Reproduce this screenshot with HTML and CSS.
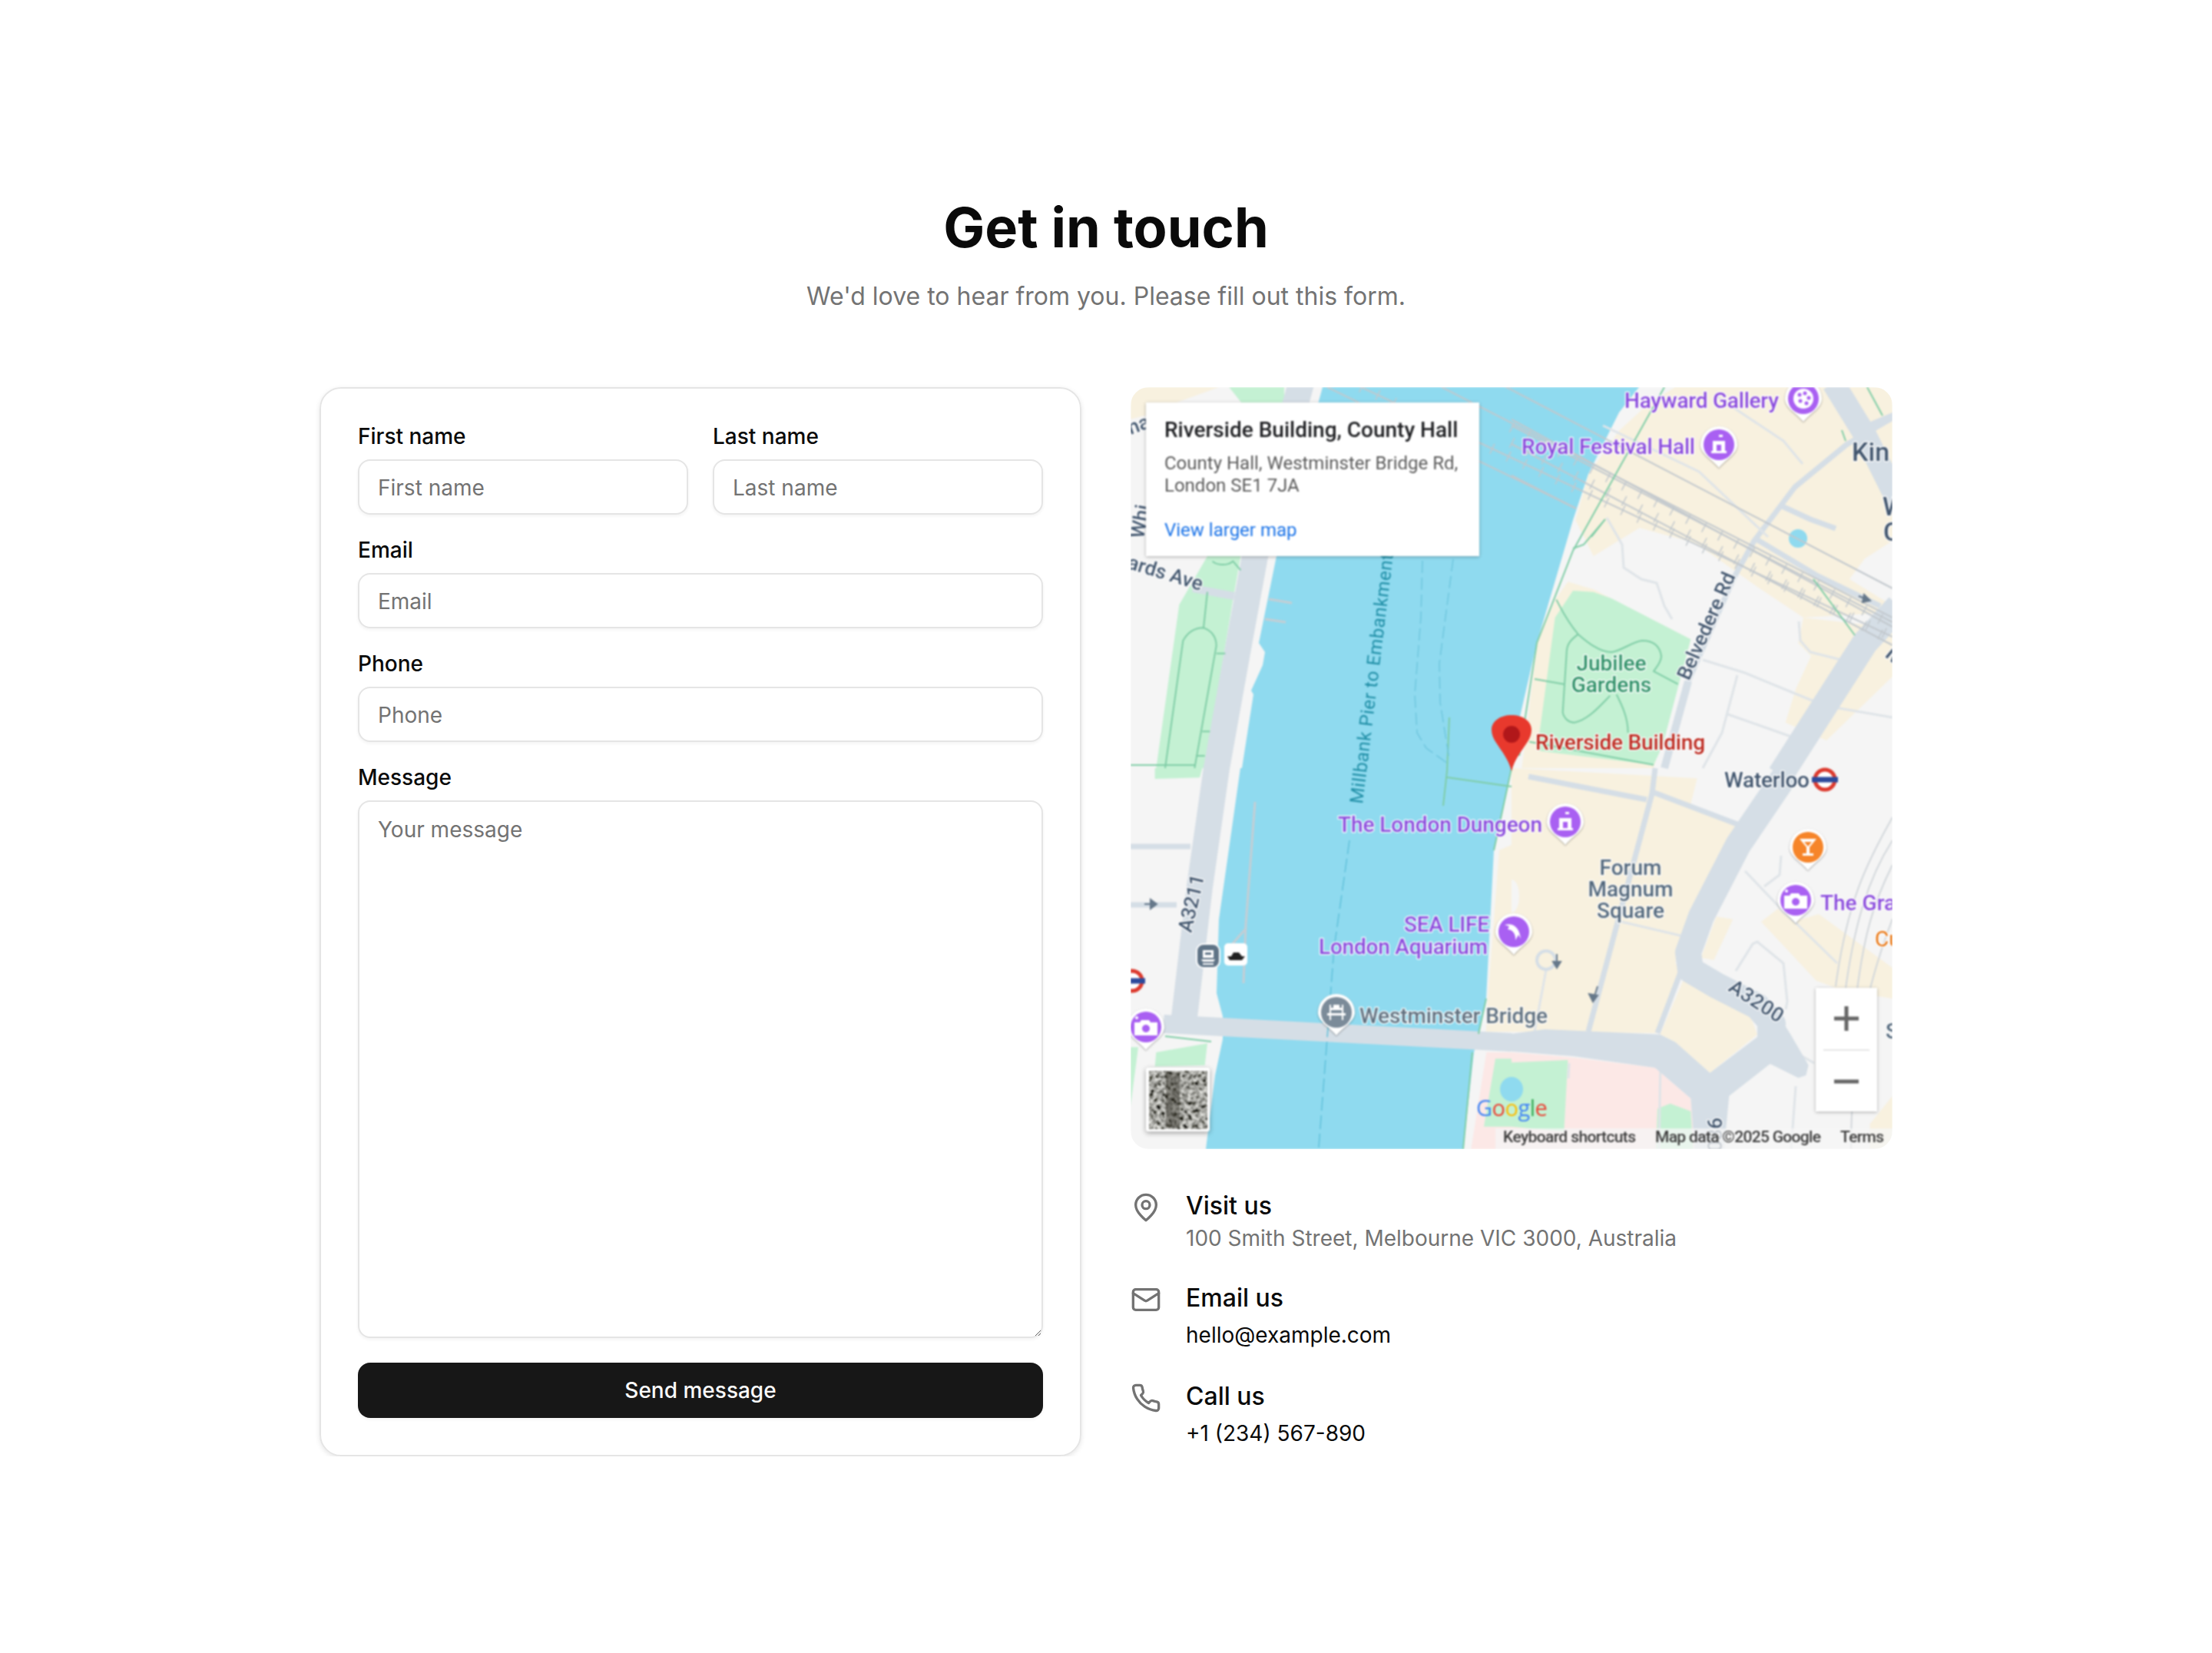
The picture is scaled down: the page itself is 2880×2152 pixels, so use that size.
FILE: index.html
```html
<!DOCTYPE html>
<html lang="en">
<head>
    <meta charset="UTF-8">
    <meta name="viewport" content="width=device-width, initial-scale=1.0">
    <title>Get in touch</title>
    <link rel="stylesheet" href="styles.css">
</head>
<body>

    <main class="page">
        <header class="intro">
            <h1>Get in touch</h1>
            <p>We'd love to hear from you. Please fill out this form.</p>
        </header>

        <div class="columns">
            <!-- Form card -->
            <form class="card">
                <div class="name-row">
                    <div class="field">
                        <label for="first">First name</label>
                        <input id="first" type="text" placeholder="First name">
                    </div>
                    <div class="field">
                        <label for="last">Last name</label>
                        <input id="last" type="text" placeholder="Last name">
                    </div>
                </div>
                <div class="field">
                    <label for="email">Email</label>
                    <input id="email" type="email" placeholder="Email">
                </div>
                <div class="field">
                    <label for="phone">Phone</label>
                    <input id="phone" type="tel" placeholder="Phone">
                </div>
                <div class="field">
                    <label for="message">Message</label>
                    <textarea id="message" placeholder="Your message"></textarea>
                </div>
                <button class="send" type="button">Send message</button>
            </form>

            <!-- Map and contact details -->
            <section class="side">
                <div class="map">
                    <div class="map-canvas">
                        <svg class="map-art" viewBox="0 0 992 992" width="992" height="992" xmlns="http://www.w3.org/2000/svg">
                            <defs>
                                <filter id="sat" x="0" y="0" width="100%" height="100%">
                                    <feTurbulence type="fractalNoise" baseFrequency="0.2" numOctaves="3" seed="7"/>
                                    <feColorMatrix type="matrix" values="1.5 0 0 0 -0.38  1.5 0 0 0 -0.38  1.45 0 0 0 -0.38  0 0 0 0 1"/>
                                </filter>
                                <path id="pin" d="M-24 0a24 24 0 1 1 48 0c0 12-15 19-24 30c-9-11-24-18-24-30z"/>
                                <g id="glyph-hall">
                                    <path d="M0-13v8M0-13h5v3h-5"/>
                                    <path d="M-8-5h16v13h-16zM-3 0v8h6v-8z" fill-rule="evenodd"/>
                                    <rect x="-10" y="8" width="20" height="3"/>
                                </g>
                                <g id="glyph-camera">
                                    <path d="M-15-6h7l2-3h10l2 3h9v17h-30zM0-3a5 5 0 1 0 .01 0z" fill-rule="evenodd"/>
                                    <circle cx="-12" cy="-12" r="2"/>
                                </g>
                                <g id="tube">
                                    <circle r="13" fill="#fff" stroke="#dc3a2e" stroke-width="5"/>
                                    <rect x="-17" y="-3.5" width="34" height="7" fill="#2c4a9c"/>
                                </g>
                            </defs>

                            <rect class="land" width="992" height="992"/>

                            <!-- top right blocks -->
                            <g transform="translate(496 0) scale(.33333)">
                                <polygon class="beige" points="640,0 1488,0 1488,600 1380,670 1320,750 1450,830 1488,850 1400,930 1140,900 1120,1000 1170,1050 1110,1180 1070,1310 1230,1380 1488,1130 1488,880 1140,900 960,780 720,610 500,550 320,660 250,520 300,340 420,170 540,60"/>
                                <polygon class="beige" points="220,760 320,790 700,985 555,1488 40,1488 100,1000 170,830"/>
                                <polygon class="green" points="240,795 320,800 390,825 700,985 590,1400 555,1475 100,1420 170,900"/>
                            </g>
                            <!-- bottom right blocks -->
                            <g transform="translate(496 496) scale(.33333)">
                                <polygon class="beige" points="0,0 725,40 700,140 880,220 650,700 640,760 660,800 580,1035 0,1030"/>
                                <ellipse class="land" cx="0" cy="500" rx="30" ry="65"/>
                                <polygon class="beige" points="800,580 865,590 790,750 740,740"/>
                                <polygon class="beige" points="580,1040 670,830 930,960 960,1040 775,1190 640,1070"/>
                                <polygon class="beige" points="975,600 1040,550 1100,600 1200,570 1488,780 1488,900 1300,870 1190,830"/>
                                <polygon class="beige" points="1400,1390 1488,1280 1488,1488 1400,1488"/>
                                <polygon class="pink" points="0,1110 240,1130 560,1170 700,1290 720,1488 0,1488"/>
                                <polygon class="green" points="0,1150 220,1140 205,1420 0,1400"/>
                                <polygon class="green" points="570,1330 620,1310 700,1340 710,1488 565,1488"/>
                            </g>
                            <!-- left side blocks -->
                            <g transform="scale(.33333)">
                                <polygon class="beige" points="0,0 345,0 180,60 60,110 0,125"/>
                                <polygon class="green" points="385,0 600,0 600,70 440,70"/>
                                <polygon class="green" points="300,660 430,660 400,830 290,1488 100,1488 190,850"/>
                                <polygon class="green" points="95,1488 280,1488 270,1525 95,1530"/>
                            </g>
                            <g transform="translate(0 496) scale(.33333)">
                                <polygon class="green" points="100,1110 300,1075 290,1160 95,1165"/>
                                <polygon class="green" points="0,1090 30,1090 0,1320"/>
                                <polygon class="beige" points="1488,300 1440,320 1395,900 1388,1030 1488,1030"/>
                                <polygon class="pink" points="1390,1110 1488,1110 1488,1488 1330,1488"/>
                                <polygon class="green" points="1425,1135 1488,1135 1488,1400 1380,1400"/>
                            </g>
                            <ellipse class="water" cx="496" cy="914" rx="15" ry="16"/>

                            <!-- river -->
                            <polygon class="water" points="250,0 662,0 636,33 596,113 576,173 529,333 506,433 496,496 473,603 463,796 453,842 447,866 433,992 98,992 110,896 120,849 120,819 112,789 115,693 143,496 145,496 160,400 157,395 172,362 175,345 167,333 190,220"/>
                            <ellipse class="water" cx="869" cy="197" rx="12" ry="12"/>

                            <!-- small roads -->
                            <g class="road-thin">
                                <polyline points="726,383 786,247 812,200 865,130 932,75 992,40"/>
                                <polyline points="813,197 895,246 976,285"/>
                                <polyline points="846,154 885,172 918,184"/>
                                <polyline points="518,507 672,537"/>
                                <polyline points="682,528 790,569"/>
                                <polyline points="683,496 679,529 596,839"/>
                                <polyline points="0,598 78,598"/>
                                <polyline points="0,674 60,674"/>
                                <polyline points="716,762 686,841"/>
                            </g>
                            <g class="road-hair">
                                <polyline points="620,170 640,205 642,235 665,250 685,255 695,285 705,302"/>
                                <polyline points="745,355 800,372 880,405 905,415 992,430"/>
                                <polyline points="790,375 770,450 745,496"/>
                                <polyline points="775,425 860,455"/>
                                <polyline points="870,305 872,330 885,345 925,355"/>
                                <polyline points="800,630 840,672 920,750"/>
                                <polyline points="788,760 810,725 816,722 850,750 855,800 853,810"/>
                                <polyline points="825,650 845,635 847,610"/>
                                <polyline points="615,50 740,110 830,195"/>
                                <polyline points="760,10 850,70 875,100"/>
                                <polyline points="570,860 690,875 688,992"/>
                                <polyline points="571,880 570,900"/>
                                <polyline points="866,910 860,992"/>
                                <polyline points="855,860 890,880"/>
                                <polyline points="639,696 716,714"/>
                                <polyline points="541,759 526,839"/>
                            </g>
                            <circle class="roundabout" cx="541" cy="746" r="12"/>

                            <!-- main roads -->
                            <g class="road-main">
                                <polyline class="w34" points="222,-5 180,150 162,220 140,340 112,496 90,650 70,820"/>
                                <polyline class="w24" points="43,829 496,853"/>
                                <polyline class="w36" points="856,500 791,596 743,689 726,736 729,759 763,779 816,806 836,829 833,852"/>
                                <polyline class="w36" points="846,505 956,333 1000,285"/>
                                <polyline class="w30" points="915,-5 955,60 990,130 1000,150"/>
                                <polyline class="w12" points="726,383 695,496"/>
                                <polyline class="w12" points="81,262 135,272"/>
                                <polyline class="w12" points="940,60 1000,35"/>
                            </g>
                            <g transform="translate(496 496) scale(.33333)">
                                <polygon class="road-fill" points="-20,1040 130,1020 580,1040 640,1070 775,1190 960,1050 960,1010 1040,960 1090,1040 1160,1160 1150,1200 1120,1210 1010,1155 850,1280 830,1488 715,1488 700,1290 560,1170 240,1125 -20,1105"/>
                            </g>

                            <!-- railway -->
                            <g class="rail">
                                <line x1="256" y1="0" x2="580" y2="158"/>
                                <line x1="405" y1="0" x2="992" y2="300"/>
                                <line x1="300" y1="0" x2="992" y2="325"/>
                                <line x1="470" y1="-10" x2="992" y2="262"/>
                                <line x1="496" y1="42" x2="992" y2="312"/>
                                <line x1="496" y1="50" x2="992" y2="306"/>
                                <line x1="496" y1="74" x2="992" y2="336"/>
                                <line x1="496" y1="115" x2="580" y2="158"/>
                            </g>
                            <g class="sleepers">
                                <line x1="300" y1="0" x2="992" y2="325"/>
                                <line x1="496" y1="52" x2="992" y2="310"/>
                                <line x1="496" y1="72" x2="992" y2="330"/>
                            </g>
                            <g class="rail-curve">
                                <path d="M938 992c0-120 20-210 54-300"/>
                                <path d="M918 780c15-110 40-160 74-220"/>
                                <path d="M930 790c12-90 30-150 62-200"/>
                                <path d="M945 792c10-80 22-120 47-170"/>
                            </g>

                            <!-- park paths -->
                            <g class="path">
                                <polyline points="506,480 529,333 576,213 695,0"/>
                                <polyline points="576,210 590,205 618,172 600,195"/>
                                <polyline points="473,603 496,496 505,470"/>
                                <polyline points="463,796 453,842"/>
                                <polyline points="445,866 433,992"/>
                                <polyline points="415,430 412,500 407,545"/>
                                <polyline points="412,508 496,520"/>
                                <polyline points="45,845 105,852"/>
                                <polyline points="889,250 943,323"/>
                                <polyline points="959,0 979,37"/>
                                <polyline points="926,56 931,70"/>
                            </g>
                            <g class="path-thick" transform="translate(496 0) scale(.33333)">
                                <path d="M175 830C200 880 235 935 260 965C300 1000 345 1035 390 1035C430 1030 470 995 510 990C550 990 578 1005 585 1050C585 1075 565 1095 555 1110L650 1160"/>
                                <path d="M260 965C235 985 215 1000 215 1040L200 1270C205 1295 225 1310 245 1310C300 1300 350 1240 385 1205"/>
                                <path d="M410 1200C430 1240 455 1290 455 1350"/>
                                <path d="M90 1140L205 1160"/>
                                <path d="M70 1385L555 1475"/>
                            </g>
                            <g class="path-thick" transform="scale(.33333)">
                                <path d="M300 800L285 940"/>
                                <path d="M135 1488L205 990C225 955 255 940 285 940C315 950 335 975 335 1010L250 1488"/>
                                <path d="M335 1040H370M280 1345H310M255 1440H290M0 1476H250"/>
                                <path d="M320 680C335 695 375 700 400 680L430 715"/>
                            </g>

                            <!-- ferry lines -->
                            <g class="ferry">
                                <polyline points="380,226 378,300 370,400 373,450 385,470 413,490"/>
                                <polyline points="420,224 402,360 403,410 415,485"/>
                            </g>
                            <g class="ferry-solid">
                                <polyline points="162,540 150,700 147,776"/>
                                <polyline points="128,730 150,705"/>
                                <line x1="180" y1="276" x2="210" y2="281"/>
                                <line x1="175" y1="302" x2="202" y2="306"/>
                            </g>
                            <polyline class="river-line" points="285,590 265,730 245,990"/>

                            <!-- labels -->
                            <text class="lbl road-name" x="0" y="62" transform="rotate(-20 0 62)">ha</text>
                            <text class="lbl road-name" x="17" y="198" transform="rotate(-80 17 198)">Whi</text>
                            <text class="lbl road-name" x="91" y="265" text-anchor="end" transform="rotate(17 91 265)">ards Ave</text>
                            <text class="lbl road-name" x="79" y="711" transform="rotate(-77 79 711)" textLength="76">A3211</text>
                            <text class="lbl road-name" x="777" y="785" transform="rotate(33 777 785)" textLength="79">A3200</text>
                            <text class="lbl road-name" x="727" y="383" transform="rotate(-66 727 383)" textLength="150">Belvedere Rd</text>
                            <text class="lbl pier" x="302" y="543" transform="rotate(-83 302 543)" textLength="378">Millbank Pier to Embankment Pier</text>

                            <text class="lbl poi" x="643" y="27" textLength="201">Hayward Gallery</text>
                            <text class="lbl poi" x="509" y="87" textLength="226">Royal Festival Hall</text>
                            <text class="lbl poi" x="270" y="579" textLength="266">The London Dungeon</text>
                            <text class="lbl poi" x="356" y="709" textLength="111">SEA LIFE</text>
                            <text class="lbl poi" x="245" y="738" textLength="220">London Aquarium</text>
                            <text class="lbl poi" x="898" y="681">The Gra</text>
                            <text class="lbl park" x="626" y="369" text-anchor="middle">Jubilee</text>
                            <text class="lbl park" x="626" y="397" text-anchor="middle">Gardens</text>
                            <text class="lbl target" x="527" y="472" textLength="221">Riverside Building</text>
                            <text class="lbl place" x="651" y="635" text-anchor="middle">Forum</text>
                            <text class="lbl place" x="651" y="663" text-anchor="middle">Magnum</text>
                            <text class="lbl place" x="651" y="691" text-anchor="middle">Square</text>
                            <text class="lbl bridge" x="298" y="828" textLength="245">Westminster Bridge</text>
                            <text class="lbl station" x="773" y="521" textLength="111">Waterloo</text>
                            <text class="lbl station big" x="939" y="96">Kin</text>
                            <text class="lbl station big" x="979" y="167">W</text>
                            <text class="lbl station big" x="980" y="200">C</text>
                            <text class="lbl station" x="981" y="350" transform="rotate(40 981 350)">M</text>
                            <text class="lbl place" x="983" y="848">S</text>
                            <text class="lbl food" x="969" y="728">Cu</text>
                            <text class="lbl road-name" x="770" y="951" text-anchor="end" transform="rotate(-90 770 951)">A3036</text>

                            <!-- one way arrows -->
                            <g class="arrow">
                                <path d="M18 673h12M26 667l8 6-8 6z"/>
                                <path d="M948 272l10 4M955 270l8 8-10 2z"/>
                                <path d="M555 738v14M550 748l5 8 5-8z"/>
                                <path d="M608 780l-5 16M597 790l5 10 6-8z"/>
                            </g>

                            <!-- markers -->
                            <g class="marker">
                                <g transform="translate(876 15)">
                                    <use href="#pin"/><circle class="purple" r="20"/>
                                    <circle class="ink" r="13"/>
                                    <circle class="purple" cx="-5" cy="-5" r="2.5"/><circle class="purple" cx="2" cy="-7" r="2.5"/><circle class="purple" cx="7" cy="-1" r="2.5"/><circle class="purple" cx="4" cy="6" r="2.5"/><circle class="purple" cx="-4" cy="3" r="2.5"/>
                                </g>
                                <g transform="translate(766 75)">
                                    <use href="#pin"/><circle class="purple" r="20"/>
                                    <use class="ink" href="#glyph-hall"/>
                                </g>
                                <g transform="translate(566 566)">
                                    <use href="#pin"/><circle class="purple" r="20"/>
                                    <use class="ink" href="#glyph-hall"/>
                                </g>
                                <g transform="translate(866 668)">
                                    <use href="#pin"/><circle class="purple" r="20"/>
                                    <use class="ink" href="#glyph-camera"/>
                                </g>
                                <g transform="translate(20 833)">
                                    <use href="#pin"/><circle class="purple" r="20"/>
                                    <use class="ink" href="#glyph-camera"/>
                                </g>
                                <g transform="translate(499 709)">
                                    <use href="#pin"/><circle class="purple" r="20"/>
                                    <path class="ink" d="M-12-9C-2-12 7-7 9 9L6 4 2 11C3 3-2-3-8-3L-6-7z"/>
                                </g>
                                <g transform="translate(882 599)">
                                    <use href="#pin"/><circle class="orange" r="20"/>
                                    <path class="ink" d="M-11-11h22l-9 11v8h5v3h-14v-3h5v-8zM-5-7l5 6 5-6z" fill-rule="evenodd"/>
                                </g>
                                <g transform="translate(268 814)">
                                    <use href="#pin"/><circle class="slate" r="20"/>
                                    <path class="ink" d="M-9-10h2v4h3v-4h8v4h3v-4h2v11h3v3h-3v6h-2v-6h-14v6h-2v-6h-3v-3h3zM-7-3v4h14v-4z" fill-rule="evenodd"/>
                                </g>
                            </g>

                            <!-- pier and boat -->
                            <rect class="boat-box" x="122" y="724" width="30" height="29" rx="5"/>
                            <path class="boat" d="M126 741h23l-4 5h-16zM131 741l3-5h7l4 5z"/>
                            <rect class="pier-box" x="86" y="725" width="30" height="31" rx="9"/>
                            <path class="ink" d="M94 733h14v10h-14zM92 745h18l-2 3h-14zM94 750h14v2h-14zM97 736v3h8v-3z" fill-rule="evenodd"/>

                            <use href="#tube" transform="translate(904 511)"/>
                            <use href="#tube" transform="translate(2 773)"/>

                            <!-- destination pin -->
                            <path class="red-pin" d="M496 500c-4-16-13-26-20-37-4-6-6-11-6-17 0-11 11-19 26-19s26 8 26 19c0 6-2 11-6 17-7 11-16 21-20 37z"/>
                            <circle class="red-dot" cx="496" cy="452" r="11"/>

                            <!-- google logo and footer -->
                            <text class="google" x="450" y="949"><tspan class="g-blue">G</tspan><tspan class="g-red">o</tspan><tspan class="g-yellow">o</tspan><tspan class="g-blue">g</tspan><tspan class="g-green">l</tspan><tspan class="g-red">e</tspan></text>
                            <rect class="attrib" x="475" y="965" width="517" height="27"/>
                            <text class="credit" x="485" y="983" textLength="173">Keyboard shortcuts</text>
                            <text class="credit" x="683" y="983" textLength="216">Map data ©2025 Google</text>
                            <text class="credit" x="924" y="983" textLength="57">Terms</text>

                            <!-- map type thumbnail -->
                            <rect class="thumb-frame" x="20" y="886" width="83" height="83" rx="3"/>
                            <rect x="24" y="890" width="76" height="76" filter="url(#sat)"/>
                            <rect class="thumb-dark" x="46" y="892" width="18" height="72"/>
                        </svg>

                        <!-- Info window -->
                        <div class="info">
                            <h3>Riverside Building, County Hall</h3>
                            <p>County Hall, Westminster Bridge Rd,<br>London SE1 7JA</p>
                            <a href="#">View larger map</a>
                        </div>

                        <!-- Zoom buttons -->
                        <div class="zoom">
                            <svg viewBox="0 0 80 160" width="80" height="160" xmlns="http://www.w3.org/2000/svg">
                                <path class="zoom-mark" d="M40 24v32M24 40h32M24 122h32"/>
                                <line class="zoom-rule" x1="10" y1="81" x2="70" y2="81"/>
                            </svg>
                        </div>
                    </div>
                </div>

                <div class="contact-item">
                    <svg class="icon" viewBox="0 0 24 24"><path d="M20 10c0 6-8 12-8 12s-8-6-8-12a8 8 0 0 1 16 0Z"/><circle cx="12" cy="10" r="3"/></svg>
                    <div>
                        <h4>Visit us</h4>
                        <p class="muted">100 Smith Street, Melbourne VIC 3000, Australia</p>
                    </div>
                </div>
                <div class="contact-item">
                    <svg class="icon" viewBox="0 0 24 24"><rect x="2" y="4" width="20" height="16" rx="2"/><path d="m22 7-8.97 5.7a1.94 1.94 0 0 1-2.06 0L2 7"/></svg>
                    <div>
                        <h4>Email us</h4>
                        <p class="link-line"><a href="#">hello@example.com</a></p>
                    </div>
                </div>
                <div class="contact-item">
                    <svg class="icon" viewBox="0 0 24 24"><path d="M22 16.92v3a2 2 0 0 1-2.18 2 19.79 19.79 0 0 1-8.63-3.07 19.5 19.5 0 0 1-6-6 19.79 19.79 0 0 1-3.07-8.67A2 2 0 0 1 4.11 2h3a2 2 0 0 1 2 1.72 12.84 12.84 0 0 0 .7 2.81 2 2 0 0 1-.45 2.11L8.09 9.91a16 16 0 0 0 6 6l1.27-1.27a2 2 0 0 1 2.11-.45 12.84 12.84 0 0 0 2.81.7A2 2 0 0 1 22 16.92z"/></svg>
                    <div>
                        <h4>Call us</h4>
                        <p class="link-line"><a href="#">+1 (234) 567-890</a></p>
                    </div>
                </div>
            </section>
        </div>
    </main>

</body>
</html>
```

FILE: styles.css
```css
* {
    box-sizing: border-box;
}
body {
    font-family: Inter, "Liberation Sans", sans-serif;
    font-size: 32px;
    line-height: 48px;
    margin: 0;
    background-color: #fff;
    color: #0a0a0a;
}
.page {
    width: 2048px;
    margin: 0 auto;
    padding-top: 256px;
}

/* Heading */
.intro {
    text-align: center;
    margin-bottom: 90px;
}
.intro h1 {
    margin: 0 0 22px;
    font-size: 72px;
    line-height: 80px;
    font-weight: 700;
}
.intro p {
    margin: 0;
    font-size: 32px;
    line-height: 56px;
    color: #737373;
}
.columns {
    display: grid;
    grid-template-columns: 992px 992px;
    gap: 64px;
    align-items: start;
}

/* Form */
.card {
    display: flex;
    flex-direction: column;
    gap: 32px;
    padding: 48px;
    border: 2px solid #e5e5e5;
    border-radius: 28px;
    box-shadow: 0 2px 6px rgba(0, 0, 0, .1);
}
.name-row {
    display: grid;
    grid-template-columns: 1fr 1fr;
    gap: 32px;
}
.field {
    display: flex;
    flex-direction: column;
    gap: 16px;
}
.field label {
    font-size: 28px;
    line-height: 28px;
    font-weight: 500;
}
.field input,
.field textarea {
    width: 100%;
    height: 72px;
    padding: 2px 24px 0;
    border: 2px solid #e5e5e5;
    border-radius: 16px;
    background: #fff;
    box-shadow: 0 2px 4px rgba(0, 0, 0, .05);
    font-family: inherit;
    font-size: 28px;
    color: #0a0a0a;
    outline: none;
}
.field textarea {
    height: 700px;
    padding: 16px 24px;
    line-height: 40px;
    resize: vertical;
    display: block;
}
.field ::placeholder {
    color: #737373;
    opacity: 1;
}
.send {
    height: 72px;
    border: 0;
    border-radius: 16px;
    background-color: #171717;
    box-shadow: 0 2px 4px rgba(0, 0, 0, .05);
    color: #fafafa;
    font-family: inherit;
    font-size: 28px;
    font-weight: 500;
}

/* Contact column */
.side {
    display: flex;
    flex-direction: column;
    gap: 32px;
}
.map {
    width: 992px;
    height: 992px;
    margin-bottom: 16px;
    border-radius: 24px;
    overflow: hidden;
}
.map-canvas {
    position: relative;
    width: 992px;
    height: 992px;
    filter: blur(.9px);
}
.map-art {
    display: block;
}
.info {
    position: absolute;
    left: 20px;
    top: 20px;
    width: 434px;
    height: 200px;
    padding: 18px 24px;
    background: #fff;
    box-shadow: 0 1px 4px rgba(0, 0, 0, .3);
    font-family: Roboto, sans-serif;
}
.info h3 {
    margin: 0 0 11px;
    font-size: 28px;
    line-height: 36px;
    font-weight: 500;
    color: #202124;
    white-space: nowrap;
}
.info p {
    margin: 0 0 17px;
    font-size: 24px;
    line-height: 28.5px;
    color: #5b5b5b;
    white-space: nowrap;
}
.info a {
    font-size: 24px;
    line-height: 36px;
    color: #1a73e8;
    text-decoration: none;
}
.zoom {
    position: absolute;
    left: 892px;
    top: 782px;
    width: 80px;
    height: 161px;
    background: #fff;
    box-shadow: 0 1px 4px rgba(0, 0, 0, .3);
}
.zoom svg {
    display: block;
}
.zoom-mark {
    fill: none;
    stroke: #666;
    stroke-width: 5;
}
.zoom-rule {
    stroke: #e6e6e6;
    stroke-width: 2;
}

/* Map fills */
.land { fill: #f5f5f5; }
.beige { fill: #f8f1df; }
.green { fill: #c4f1d3; }
.pink { fill: #fce8e6; }
.water { fill: #8fdaef; }
.road-fill { fill: #d5dee6; }
.road-main polyline {
    fill: none;
    stroke: #d5dee6;
    stroke-linejoin: round;
}
.w12 { stroke-width: 10; }
.w24 { stroke-width: 24; }
.w30 { stroke-width: 30; }
.w34 { stroke-width: 34; }
.w36 { stroke-width: 34; }
.road-thin polyline {
    fill: none;
    stroke: #d5dee6;
    stroke-width: 7;
}
.road-hair polyline {
    fill: none;
    stroke: #dfe4e8;
    stroke-width: 3;
}
.roundabout {
    fill: none;
    stroke: #d5dee6;
    stroke-width: 4;
}
.rail line {
    stroke: #c2c8cd;
    stroke-width: 2;
}
.sleepers line {
    stroke: #c2c8cd;
    stroke-width: 14;
    stroke-dasharray: 1.5 22;
}
.rail-curve path {
    fill: none;
    stroke: #d2d7db;
    stroke-width: 2;
}
.path polyline {
    fill: none;
    stroke: #7fcda6;
    stroke-width: 2;
}
.path-thick path {
    fill: none;
    stroke: #7fcda6;
    stroke-width: 6;
}
.ferry polyline {
    fill: none;
    stroke: #6fc6de;
    stroke-width: 1.5;
    stroke-dasharray: 16 6;
}
.ferry-solid polyline,
.ferry-solid line {
    fill: none;
    stroke: #c4ced4;
    stroke-width: 3;
}
.river-line {
    fill: none;
    stroke: #5fc0da;
    stroke-width: 1.5;
    stroke-dasharray: 18 6;
}
.arrow path {
    fill: #66788a;
    stroke: #66788a;
    stroke-width: 2;
}

/* Map labels */
.lbl {
    font-family: Roboto, sans-serif;
    font-size: 28px;
    paint-order: stroke;
    stroke: #fff;
    stroke-width: 2.5px;
    stroke-linejoin: round;
}
.road-name {
    fill: #42566e;
    font-size: 26px;
    font-weight: 500;
}
.pier {
    fill: #1f8ea6;
    stroke: none;
    font-size: 24px;
}
.poi {
    fill: #8a4bdc;
    font-weight: 500;
}
.park {
    fill: #2f9168;
    font-weight: 500;
}
.target {
    fill: #bd2a20;
    font-weight: 500;
}
.place {
    fill: #53687c;
    font-weight: 500;
}
.bridge {
    fill: #5f707f;
    font-weight: 500;
}
.food { fill: #e8710a; }
.station {
    fill: #42566e;
    font-weight: 500;
}
.big { font-size: 34px; }

/* Map markers */
.marker use {
    fill: #fff;
}
.marker > g {
    filter: drop-shadow(0 1px 1px rgba(0, 0, 0, .35));
}
.purple { fill: #a960f2; }
.orange { fill: #f6852a; }
.slate { fill: #7b8b99; }
.marker .ink,
.ink {
    fill: #fff;
}
.boat-box { fill: #fff; }
.boat { fill: #222; }
.pier-box {
    fill: #5f7386;
    stroke: #fff;
    stroke-width: 2;
}
.red-pin { fill: #e8392d; }
.red-dot { fill: #b1171a; }
.google {
    font-family: "Open Sans", sans-serif;
    font-size: 29px;
    letter-spacing: -.5px;
    font-weight: 500;
}
.g-blue { fill: #4285f4; }
.g-red { fill: #ea4335; }
.g-yellow { fill: #fbbc05; }
.g-green { fill: #34a853; }
.attrib {
    fill: #f5f5f5;
    opacity: .75;
}
.credit {
    font-family: Roboto, sans-serif;
    font-size: 21px;
    font-weight: 500;
    fill: #3c3c3c;
}
.thumb-frame {
    fill: #fff;
    filter: drop-shadow(0 2px 3px rgba(0, 0, 0, .35));
}
.thumb-dark {
    fill: #2c2a22;
    opacity: .45;
}

/* Contact rows */
.contact-item {
    display: flex;
    gap: 32px;
}
.icon {
    flex: none;
    width: 40px;
    height: 40px;
    margin-top: 8px;
    fill: none;
    stroke: #737373;
    stroke-width: 2;
    stroke-linecap: round;
    stroke-linejoin: round;
}
.contact-item h4 {
    height: 48px;
    margin: 0;
    padding-top: 4px;
    font-size: 32px;
    line-height: 44px;
    font-weight: 500;
}
.contact-item p {
    margin: 0;
}
.contact-item .link-line {
    height: 48px;
    padding-top: 2px;
    line-height: 46px;
}
.contact-item a {
    font-size: 28px;
    color: #0a0a0a;
    text-decoration: none;
}
.contact-item .muted {
    font-size: 28px;
    line-height: 40px;
    color: #737373;
}
```
